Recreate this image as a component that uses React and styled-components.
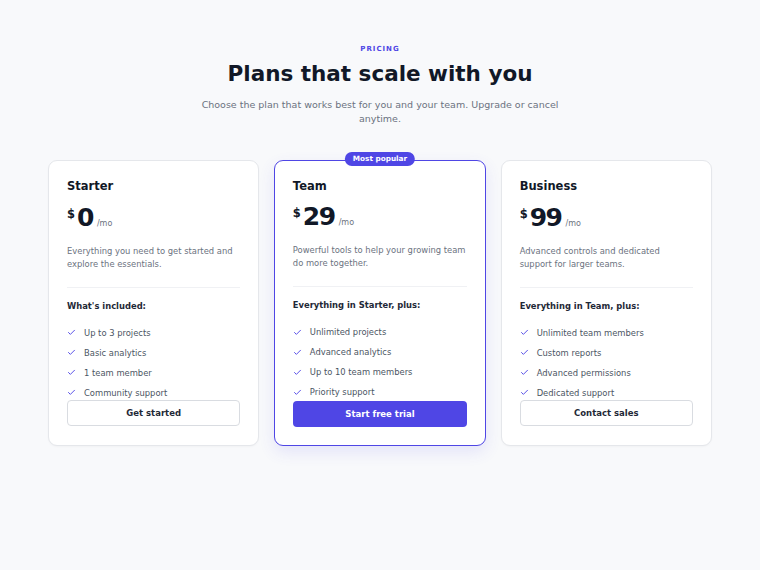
import React from 'react';
import styled, {createGlobalStyle} from "styled-components";

const GlobalStyle = createGlobalStyle`
  body {
    margin: 0;
    background: #f8f9fb;
    font-family: "DejaVu Sans", "Liberation Sans", sans-serif;
    color: #111827;
  }
`

const Page = styled.div`
  min-height: 570px;
  padding-top: 44px;
  box-sizing: border-box;
`

const Header = styled.div`
  display: flex;
  flex-direction: column;
  align-items: center;
  text-align: center;
`

const Eyebrow = styled.div`
  font-size: 7px;
  line-height: 10px;
  font-weight: 700;
  letter-spacing: 1px;
  color: #4f46e5;
`

const Title = styled.h1`
  margin: 7px 0 0;
  font-size: 21.5px;
  line-height: 26px;
  font-weight: 700;
  color: #111827;
`

const Subtitle = styled.p`
  margin: 11px 0 0;
  max-width: 362px;
  font-size: 9.5px;
  line-height: 14px;
  color: #6b7280;
`

const Grid = styled.div`
  display: grid;
  grid-template-columns: repeat(3, 1fr);
  width: 664px;
  gap: 15px;
  margin: 34px auto 0;
`

const Card = styled.div`
  position: relative;
  display: flex;
  flex-direction: column;
  background: #fff;
  border: ${p => p.$featured ? '1.5px solid #4f46e5' : '1px solid #e5e7eb'};
  border-radius: 9px;
  padding: ${p => p.$featured ? '17.5px 17.5px 18.5px' : '18px 18px 19px'};
  box-shadow: ${p => p.$featured ? '0 6px 16px rgba(79,70,229,0.12)' : '0 1px 2px rgba(0,0,0,0.03)'};
  height: 286px;
  box-sizing: border-box;
`

const Badge = styled.div`
  position: absolute;
  top: -9px;
  left: 50%;
  transform: translateX(-50%);
  background: #4f46e5;
  color: #fff;
  font-size: 7.3px;
  line-height: 14px;
  font-weight: 700;
  padding: 0 8px;
  border-radius: 999px;
  white-space: nowrap;
`

const PlanName = styled.h3`
  margin: 0;
  font-size: 11.5px;
  line-height: 14px;
  font-weight: 700;
  color: #111827;
`

const PriceRow = styled.div`
  display: flex;
  align-items: baseline;
  margin-top: 9.5px;
  line-height: 30px;
`

const Currency = styled.span`
  font-size: 11.5px;
  font-weight: 700;
  align-self: flex-start;
  line-height: 14px;
  margin-top: 4px;
  margin-right: 2px;
`

const Amount = styled.span`
  font-size: 25px;
  font-weight: 700;
  letter-spacing: -1.5px;
`

const Per = styled.span`
  font-size: 8px;
  color: #6b7280;
  margin-left: 4px;
`

const Description = styled.p`
  margin: 6px 0 0;
  font-size: 8.4px;
  line-height: 13px;
  color: #6b7280;
`

const Divider = styled.hr`
  border: none;
  border-top: 1px solid #f0f1f4;
  margin: 16px 0 0;
`

const IncludedLabel = styled.div`
  margin-top: 12px;
  font-size: 8.4px;
  line-height: 12px;
  font-weight: 700;
  color: #1f2937;
`

const FeatureList = styled.ul`
  list-style: none;
  margin: 15px 0 0;
  padding: 0;
  display: flex;
  flex-direction: column;
  gap: 8px;
`

const Feature = styled.li`
  display: flex;
  align-items: center;
  gap: 8px;
  font-size: 8.4px;
  line-height: 12px;
  color: #4b5563;
`

const Button = styled.button`
  margin-top: auto;
  flex-shrink: 0;
  height: 26px;
  width: 100%;
  border-radius: 4px;
  font-family: inherit;
  font-size: 8.5px;
  font-weight: 700;
  cursor: pointer;
  border: ${p => p.$primary ? 'none' : '1px solid #d9dce1'};
  background: ${p => p.$primary ? '#4f46e5' : '#fff'};
  color: ${p => p.$primary ? '#fff' : '#1f2937'};
`

const CheckIcon = () => (
    <svg width="9" height="9" viewBox="0 0 24 24" fill="none" stroke="#4f46e5" strokeWidth="2.5" strokeLinecap="round" strokeLinejoin="round">
        <path d="M20 6 9 17l-5-5"/>
    </svg>
)

const plans = [
    {
        name: 'Starter', price: '0',
        desc: 'Everything you need to get started and explore the essentials.',
        label: "What's included:",
        features: ['Up to 3 projects', 'Basic analytics', '1 team member', 'Community support'],
        cta: 'Get started'
    },
    {
        name: 'Team', price: '29', featured: true,
        desc: 'Powerful tools to help your growing team do more together.',
        label: 'Everything in Starter, plus:',
        features: ['Unlimited projects', 'Advanced analytics', 'Up to 10 team members', 'Priority support'],
        cta: 'Start free trial'
    },
    {
        name: 'Business', price: '99',
        desc: 'Advanced controls and dedicated support for larger teams.',
        label: 'Everything in Team, plus:',
        features: ['Unlimited team members', 'Custom reports', 'Advanced permissions', 'Dedicated support'],
        cta: 'Contact sales'
    }
]

const App = () => {
    return (
        <>
            <GlobalStyle/>
            <Page>
                <Header>
                    <Eyebrow>PRICING</Eyebrow>
                    <Title>Plans that scale with you</Title>
                    <Subtitle>Choose the plan that works best for you and your team. Upgrade or cancel anytime.</Subtitle>
                </Header>
                <Grid>
                    {plans.map(plan => (
                        <Card key={plan.name} $featured={plan.featured}>
                            {plan.featured && <Badge>Most popular</Badge>}
                            <PlanName>{plan.name}</PlanName>
                            <PriceRow>
                                <Currency>$</Currency>
                                <Amount>{plan.price}</Amount>
                                <Per>/mo</Per>
                            </PriceRow>
                            <Description>{plan.desc}</Description>
                            <Divider/>
                            <IncludedLabel>{plan.label}</IncludedLabel>
                            <FeatureList>
                                {plan.features.map(f => (
                                    <Feature key={f}><CheckIcon/>{f}</Feature>
                                ))}
                            </FeatureList>
                            <Button $primary={plan.featured}>{plan.cta}</Button>
                        </Card>
                    ))}
                </Grid>
            </Page>
        </>
    );
};

export default App;
